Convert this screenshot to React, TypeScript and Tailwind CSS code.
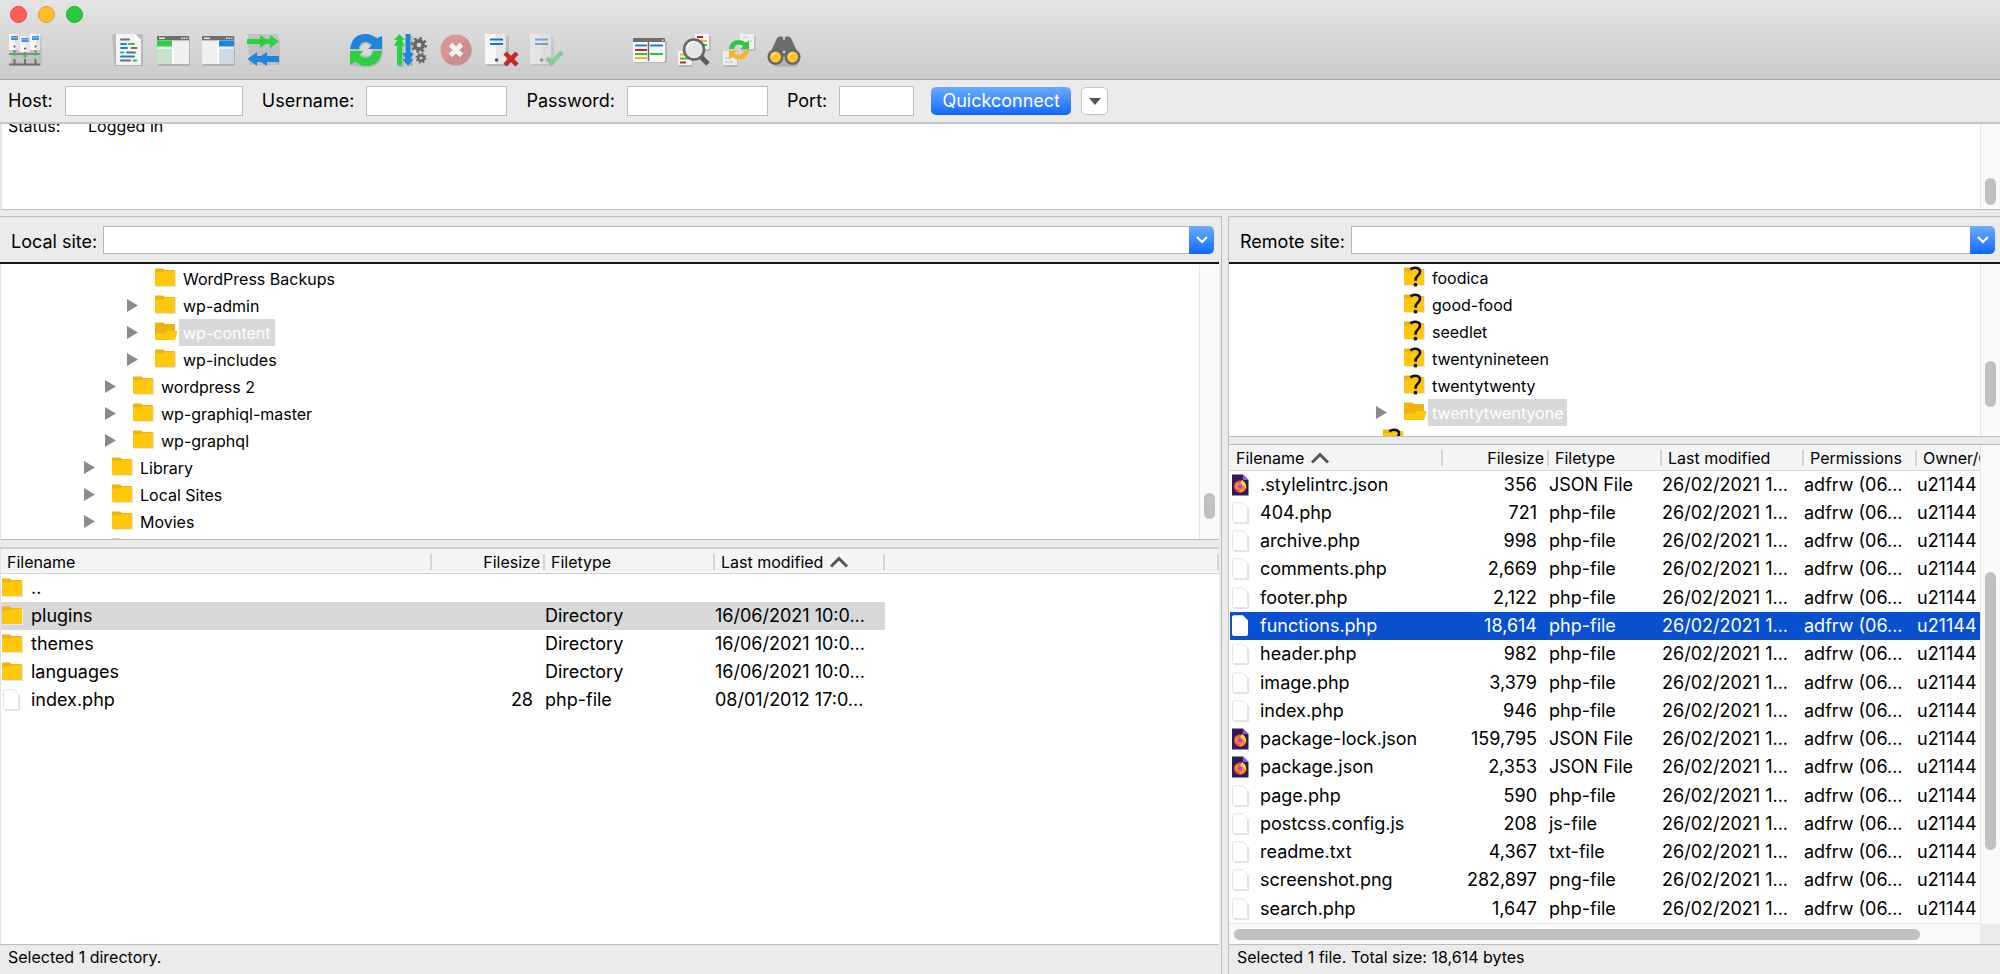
import React from "react";
import type { ReactNode } from "react";

type TreeItem = {
  name: string;
  level: number;
  icon: "folder" | "open" | "unknown";
  expandable?: boolean;
  selected?: boolean;
};

type FileRow = {
  name: string;
  size: string;
  type: string;
  modified: string;
  icon: "folder" | "file" | "json";
  selected?: boolean;
};

const localTree: TreeItem[] = [
  { name: "WordPress Backups", level: 3, icon: "folder" },
  { name: "wp-admin", level: 3, icon: "folder", expandable: true },
  { name: "wp-content", level: 3, icon: "open", expandable: true, selected: true },
  { name: "wp-includes", level: 3, icon: "folder", expandable: true },
  { name: "wordpress 2", level: 2, icon: "folder", expandable: true },
  { name: "wp-graphiql-master", level: 2, icon: "folder", expandable: true },
  { name: "wp-graphql", level: 2, icon: "folder", expandable: true },
  { name: "Library", level: 1, icon: "folder", expandable: true },
  { name: "Local Sites", level: 1, icon: "folder", expandable: true },
  { name: "Movies", level: 1, icon: "folder", expandable: true },
  { name: "", level: 1, icon: "folder" },
];

const remoteTree: TreeItem[] = [
  { name: "foodica", level: 4, icon: "unknown" },
  { name: "good-food", level: 4, icon: "unknown" },
  { name: "seedlet", level: 4, icon: "unknown" },
  { name: "twentynineteen", level: 4, icon: "unknown" },
  { name: "twentytwenty", level: 4, icon: "unknown" },
  { name: "twentytwentyone", level: 4, icon: "open", expandable: true, selected: true },
  { name: "", level: 3, icon: "unknown" },
];

const localFiles: FileRow[] = [
  { name: "..", size: "", type: "", modified: "", icon: "folder" },
  { name: "plugins", size: "", type: "Directory", modified: "16/06/2021 10:0...", icon: "folder", selected: true },
  { name: "themes", size: "", type: "Directory", modified: "16/06/2021 10:0...", icon: "folder" },
  { name: "languages", size: "", type: "Directory", modified: "16/06/2021 10:0...", icon: "folder" },
  { name: "index.php", size: "28", type: "php-file", modified: "08/01/2012 17:0...", icon: "file" },
];

const remoteDate = "26/02/2021 1...";

const remoteFiles: FileRow[] = [
  { name: ".stylelintrc.json", size: "356", type: "JSON File", modified: remoteDate, icon: "json" },
  { name: "404.php", size: "721", type: "php-file", modified: remoteDate, icon: "file" },
  { name: "archive.php", size: "998", type: "php-file", modified: remoteDate, icon: "file" },
  { name: "comments.php", size: "2,669", type: "php-file", modified: remoteDate, icon: "file" },
  { name: "footer.php", size: "2,122", type: "php-file", modified: remoteDate, icon: "file" },
  { name: "functions.php", size: "18,614", type: "php-file", modified: remoteDate, icon: "file", selected: true },
  { name: "header.php", size: "982", type: "php-file", modified: remoteDate, icon: "file" },
  { name: "image.php", size: "3,379", type: "php-file", modified: remoteDate, icon: "file" },
  { name: "index.php", size: "946", type: "php-file", modified: remoteDate, icon: "file" },
  { name: "package-lock.json", size: "159,795", type: "JSON File", modified: remoteDate, icon: "json" },
  { name: "package.json", size: "2,353", type: "JSON File", modified: remoteDate, icon: "json" },
  { name: "page.php", size: "590", type: "php-file", modified: remoteDate, icon: "file" },
  { name: "postcss.config.js", size: "208", type: "js-file", modified: remoteDate, icon: "file" },
  { name: "readme.txt", size: "4,367", type: "txt-file", modified: remoteDate, icon: "file" },
  { name: "screenshot.png", size: "282,897", type: "png-file", modified: remoteDate, icon: "file" },
  { name: "search.php", size: "1,647", type: "php-file", modified: remoteDate, icon: "file" },
];

/* ---------- small icons ---------- */

function FolderShape() {
  return (
    <>
      <path d="M2 4h20v16H2z" fill="#e3e6f0" />
      <path d="M1 2.500q0-1 1-1h7L11 3h9q1 0 1 1v4H1z" fill="#ecb40c" />
      <path d="M1 5.500h8l2-1.500h10v14q0 1-1 1H2q-1 0-1-1z" fill="#ffc90a" />
    </>
  );
}

function FolderIcon() {
  return (
    <svg className="block size-[22px] shrink-0" viewBox="0 0 22 22" aria-hidden="true">
      <FolderShape />
    </svg>
  );
}

function OpenFolderIcon() {
  return (
    <svg className="block size-[22px] shrink-0 overflow-visible" viewBox="0 0 22 22" aria-hidden="true">
      <path d="M1 2.500q0-1 1-1h7L11 3h9q1 0 1 1v14H1z" fill="#ecb40c" />
      <path d="M1 12.500h10l2.500-2.500h10L21.500 18q-.5 1-1.500 1H2q-1 0-1-1z" fill="#ffc90a" />
    </svg>
  );
}

function UnknownFolderIcon() {
  return (
    <svg className="block size-[22px] shrink-0" viewBox="0 0 22 22" aria-hidden="true">
      <FolderShape />
      <path
        d="M7.500 3.500Q9.500 1.500 12.500 1.700q4.500.3 4.500 4 0 2.200-2.500 4.200-2 1.800-2 4.800"
        fill="none"
        stroke="#111"
        strokeWidth="2.600"
      />
      <circle cx="12.500" cy="18.700" r="1.900" fill="#111" />
    </svg>
  );
}

function FileIcon({ selected }: { selected?: boolean }) {
  return (
    <svg className="block size-[22px] shrink-0" viewBox="0 0 22 22" aria-hidden="true">
      {!selected && <path d="M4 21.500h13q1.500 0 1.500-1.500V6" fill="none" stroke="#e2e2e2" strokeWidth="1.500" />}
      <path
        d="M3.500.800h9.500l4.500 4.500v14.200q0 1-1 1h-13q-1 0-1-1V1.800q0-1 1-1z"
        fill="#fff"
        stroke={selected ? "#fff" : "#e4e4e4"}
      />
    </svg>
  );
}

function JsonIcon() {
  return (
    <svg className="block size-[22px] shrink-0" viewBox="0 0 22 22" aria-hidden="true">
      <path d="M2 .500h11l5.500 5.500V21.500H2z" fill="#2b1d55" />
      <path d="M13 .500 18.500 6H13z" fill="#9059ff" />
      <circle cx="10" cy="12.500" r="6" fill="#ff4f4a" />
      <path d="M5 9.500Q8 8.500 9.500 10L12 6q4.500 3.500 4 7.500-1.200 5-6 5Q5 17 5 9.500z" fill="#ff8a1f" />
      <path d="M12 6q5.500 4 3.800 9-1.500-4.500-5.300-5z" fill="#ffd83b" />
      <circle cx="10" cy="12.500" r="2.300" fill="#9b4fe0" />
      <path d="M4.500 14q3 3 6.500 1.500-2.500 3-5 1.500z" fill="#ff2f5e" />
    </svg>
  );
}

function SortArrow() {
  return (
    <svg className="block h-3 w-5" viewBox="0 0 20 12" aria-hidden="true">
      <path d="m2 10.500 8-8 8 8" fill="none" stroke="#555" strokeWidth="3" />
    </svg>
  );
}

/* ---------- toolbar icons ---------- */

function ToolIcon({ children, dim }: { children: ReactNode; dim?: boolean }) {
  return (
    <svg
      className={dim ? "block size-9 opacity-50" : "block size-9"}
      viewBox="0 0 36 36"
      aria-hidden="true"
    >
      {children}
    </svg>
  );
}

function Tower({ x, y }: { x: number; y: number }) {
  return (
    <g transform={`translate(${x} ${y})`}>
      <path d="M0 0h10v16H0z" fill="#f7f7f7" />
      <path d="M6 0h4v16H6z" fill="#e4e4e4" />
      <path d="M2 2h7v4H2z" fill="#3d8ddb" />
      <path d="M2 3.600h7" stroke="#9cc6ee" strokeWidth=".8" />
      <circle cx="5.500" cy="12.500" r="1" fill="#444" />
    </g>
  );
}

function SiteManagerIcon() {
  return (
    <ToolIcon>
      <path d="M4 4h31v30H4z" fill="#000" opacity=".08" />
      <Tower x={2} y={2} />
      <Tower x={23} y={2} />
      <Tower x={12.5} y={4} />
      <path d="M2 22h31M7.500 18v5M28.500 18v5M18 20v5" stroke="#777" strokeWidth="1.500" />
      <path d="M2 32.500h31M7.500 27v5M28.500 27v5M18 27v5" stroke="#707070" strokeWidth="2" />
      <path d="M6 20.500h3v3H6zM27 20.500h3v3h-3zM16.500 22.500h3v3h-3z" fill="#2ccf3c" />
    </ToolIcon>
  );
}

function LogIcon() {
  return (
    <ToolIcon>
      <path d="M3 2h30v32H5L2 6z" fill="#000" opacity=".13" />
      <path d="M6 2h19l6 6v25H6z" fill="#f4f4f4" />
      <path d="M25 2v6h6z" fill="#fff" />
      <g strokeWidth="2" strokeLinecap="round">
        <path d="M11 7.500h8M21.500 16h5M17 20.500h8M11 28.500h9" stroke="#6d6d6d" />
        <path d="M11 12h5M11 16h6M11 24.500h13" stroke="#1d83d8" />
        <path d="M19 12h5M11 20.500h2.500M23.500 28.500h3" stroke="#27c93f" />
      </g>
    </ToolIcon>
  );
}

function WindowFrame() {
  return (
    <>
      <path d="M3 4h32v30H3z" fill="#000" opacity=".14" />
      <path d="M2 5q0-1 1-1h30q1 0 1 1v3.500H2z" fill="#6e6e6e" />
      <path d="M4 5.500h6V7H4zM26 5.500h1.500V7H26zM28.500 5.500H30V7h-1.500zM31 5.500h1.500V7H31z" fill="#e6e6e6" />
      <path d="M2 8.500h32V31q0 1-1 1H3q-1 0-1-1z" fill="#f0f0f0" />
    </>
  );
}

function LocalTreeIcon() {
  return (
    <ToolIcon>
      <WindowFrame />
      <path d="M2 8.500h15v6H2z" fill="#2bd043" />
      <path d="M2 17h15v15H3q-1 0-1-1z" fill="#c6e2ca" />
      <path d="M17 8.500h1.500V32H17z" fill="#fff" />
    </ToolIcon>
  );
}

function RemoteTreeIcon() {
  return (
    <ToolIcon>
      <WindowFrame />
      <path d="M19 8.500h15v6H19z" fill="#1d86dc" />
      <path d="M19 17h15v14q0 1-1 1H19z" fill="#ccdae8" />
      <path d="M17.500 8.500H19V32h-1.500z" fill="#fff" />
    </ToolIcon>
  );
}

function QueueIcon() {
  return (
    <ToolIcon>
      <path d="M3 2h30l2 9v22H4z" fill="#000" opacity=".09" />
      <path d="M2 7h13V3l6 4h4V3l9 6.500-9 6.500v-4h-4l-6 4v-4H2z" fill="#2bd043" />
      <path d="M34 24v6H22v4l-6-4h-4v4l-9.500-7 9.500-7v4h4l6-4v4z" fill="#1d86dc" />
    </ToolIcon>
  );
}

function RefreshShape() {
  return (
    <>
      <path d="M2 17Q4 2 18 2q6 0 10.500 4.500L34 4v13H20l4-4q-3-3-6-3-6 0-7 7z" fill="#1d86dc" />
      <path d="M34 19Q32 34 18 34q-6 0-10.500-4.500L2 33.500V19h13.500l-4 4q3 3 6.500 3 6 0 7-7z" fill="#2bd043" />
    </>
  );
}

function RefreshIcon() {
  return (
    <ToolIcon>
      <path d="M4 18.500q2-15 16-15l15 2v15q-2 15-16 15L4 34z" opacity=".1" />
      <circle cx="18" cy="18" r="6" fill="#d8d8d8" />
      <RefreshShape />
    </ToolIcon>
  );
}

function Gear({ cx, cy, r }: { cx: number; cy: number; r: number }) {
  return (
    <g fill="none" stroke="#666">
      <circle cx={cx} cy={cy} r={r * 0.52} strokeWidth={r * 0.45} />
      <circle
        cx={cx}
        cy={cy}
        r={r * 0.85}
        strokeWidth={r * 0.3}
        strokeDasharray={`${r * 0.334} ${r * 0.334}`}
      />
    </g>
  );
}

function ProcessQueueIcon() {
  return (
    <ToolIcon>
      <path d="M6 12h5v23H6zM16 4h4v30h-4z" fill="#000" opacity=".12" />
      <path d="M6.500 2 12 8H9l3 6H9v19.500H4V14H1l3-6H1z" fill="#2bd043" />
      <path d="M12.500 2h5v19h3l-3 6h3L15 34l-5.500-7h3l-3-6h3z" fill="#1d86dc" />
      <Gear cx={26} cy={13} r={8} />
      <Gear cx={28} cy={26} r={5.500} />
    </ToolIcon>
  );
}

function CancelIcon() {
  return (
    <ToolIcon>
      <circle cx="18" cy="18" r="15.500" fill="#d99494" />
      <path d="M29 7a15.500 15.500 0 0 1-22 22z" fill="#c98e8e" />
      <path d="m12.500 12.500 11 11M23.500 12.500l-11 11" stroke="#f2f2f2" strokeWidth="5" />
    </ToolIcon>
  );
}

function ServerBox() {
  return (
    <>
      <path d="M4 4h22v30H4z" fill="#000" opacity=".12" />
      <path d="M2 2h21v30H2z" fill="#f6f6f6" />
      <path d="M13 2h10v30H13z" fill="#e6e6e6" />
      <path d="M7 7.500h13M7 12h13" stroke="#1f72c6" strokeWidth="2" />
      <circle cx="13.500" cy="28" r="1.800" fill="#555" />
    </>
  );
}

function DisconnectIcon() {
  return (
    <ToolIcon>
      <ServerBox />
      <path d="m22 21 12 12M34 21 22 33" stroke="#c62828" strokeWidth="4.500" />
    </ToolIcon>
  );
}

function ReconnectIcon() {
  return (
    <ToolIcon dim>
      <ServerBox />
      <path d="m19 26 4.500 5L34 20" fill="none" stroke="#35c860" strokeWidth="4.500" />
    </ToolIcon>
  );
}

function FilterIcon() {
  return (
    <ToolIcon>
      <path d="M4 9h32v22H4z" fill="#000" opacity=".14" />
      <path d="M2 7q0-1 1-1h30q1 0 1 1v3H2z" fill="#6e6e6e" />
      <path d="M31 7.500h1.500V9H31z" fill="#ddd" />
      <path d="M2 10h32v18q0 2-2 2H4q-2 0-2-2z" fill="#f8f8f8" />
      <g strokeWidth="2">
        <path d="M4 13.500h12M19 13.500h13" stroke="#1d83d8" />
        <path d="M4 18h12" stroke="#d02424" />
        <path d="M4 22h12M19 22h13" stroke="#27c93f" />
        <path d="M4 26h12" stroke="#f6b41e" />
      </g>
      <path d="M17.500 10v19" stroke="#6a6a6a" strokeWidth="1.500" />
    </ToolIcon>
  );
}

function CompareIcon() {
  return (
    <ToolIcon>
      <path d="M20 4h15v15H20zM3 20h14v15H3z" fill="#000" opacity=".12" />
      <path d="M19 2h14v15H19zM2 19h14v14H2z" fill="#f6f6f6" />
      <path d="M21 5h6M4 30.500h6" stroke="#d02424" strokeWidth="2" />
      <path d="M25 9h6M4 22.500h6" stroke="#f6b41e" strokeWidth="2" />
      <path d="M26 13h5M4 26.500h8" stroke="#27c93f" strokeWidth="2" />
      <path d="m24 24 8 8" stroke="#5c5c5c" strokeWidth="5" />
      <circle cx="18" cy="17.500" r="10" fill="#e6e6e6" stroke="#666" strokeWidth="2.500" />
      <path d="M11 16q1-6 7-6" fill="none" stroke="#fff" strokeWidth="2" />
    </ToolIcon>
  );
}

function SyncBrowseIcon() {
  return (
    <ToolIcon>
      <path d="M20 4h15v15H20zM3 20h14v15H3z" fill="#000" opacity=".1" />
      <path d="M19 2h14v15H19zM2 19h14v14H2z" fill="#efefef" />
      <path d="M22 5.500h5M27 9h4M4 26h5M4 30h8" stroke="#d6d6d6" strokeWidth="2" />
      <path d="M8 17q1-9 10-9 4 0 6.500 2.500L28 9v8h-9l3-3q-2-1.500-4-1.500-4 0-5 4.500z" fill="#2bc943" />
      <path d="M28 18.500q-1 9-10 9-4 0-6.500-2.500L8 27.500v-9h9l-3 3q2 1.500 4 1.500 4 0 5-4.500z" fill="#f6b62c" />
    </ToolIcon>
  );
}

function SearchIcon() {
  return (
    <ToolIcon>
      <path d="M5 22 12 6l13 1 10 18-4 10H9z" fill="#000" opacity=".12" />
      <path d="M11 6q3-3 6-1v3h2V5q3-2 6 1l8 18H3z" fill="#6d6d6d" />
      <circle cx="9.500" cy="25" r="8" fill="#666" />
      <circle cx="26.500" cy="25" r="8" fill="#666" />
      <circle cx="9.500" cy="25" r="5.500" fill="#ffc52b" />
      <circle cx="26.500" cy="25" r="5.500" fill="#ffc52b" />
      <path d="M6.500 24q.5-2 3-3M23.500 24q.5-2 3-3" fill="none" stroke="#fff0b8" strokeWidth="1.500" />
      <circle cx="18" cy="20" r="1.300" fill="#ddd" />
    </ToolIcon>
  );
}

const toolGroups = [
  [{ label: "Site Manager", icon: <SiteManagerIcon /> }],
  [
    { label: "Toggle message log", icon: <LogIcon /> },
    { label: "Toggle local tree", icon: <LocalTreeIcon /> },
    { label: "Toggle remote tree", icon: <RemoteTreeIcon /> },
    { label: "Toggle transfer queue", icon: <QueueIcon /> },
  ],
  [
    { label: "Refresh", icon: <RefreshIcon /> },
    { label: "Process queue", icon: <ProcessQueueIcon /> },
    { label: "Cancel", icon: <CancelIcon /> },
    { label: "Disconnect", icon: <DisconnectIcon /> },
    { label: "Reconnect", icon: <ReconnectIcon /> },
  ],
  [
    { label: "Filters", icon: <FilterIcon /> },
    { label: "Directory comparison", icon: <CompareIcon /> },
    { label: "Synchronized browsing", icon: <SyncBrowseIcon /> },
    { label: "Find files", icon: <SearchIcon /> },
  ],
];

/* ---------- window parts ---------- */

function TitleBar() {
  return (
    <header className="border-b border-[#a5a5a5] bg-linear-to-b from-[#e4e4e4] to-[#cbcbcb] pb-[11px]">
      <div className="flex gap-[11px] px-2.5 pt-1.5">
        <button aria-label="Close" className="size-[17px] rounded-full border border-[#e0443e] bg-[#ff5f57]" />
        <button aria-label="Minimize" className="size-[17px] rounded-full border border-[#dea123] bg-[#febc2e]" />
        <button aria-label="Zoom" className="size-[17px] rounded-full border border-[#1aab29] bg-[#28c840]" />
      </div>
      <div className="flex gap-[67px] px-[7px] pt-[9px]">
        {toolGroups.map((group) => (
          <div key={group[0].label} className="flex gap-[9px]">
            {group.map((tool) => (
              <button key={tool.label} aria-label={tool.label}>
                {tool.icon}
              </button>
            ))}
          </div>
        ))}
      </div>
    </header>
  );
}

function Field({ id, label, width, type = "text" }: { id: string; label: string; width: string; type?: string }) {
  return (
    <div className="flex items-center gap-3">
      <label htmlFor={id}>{label}</label>
      <input id={id} type={type} className={`h-[30px] border border-[#bdbdbd] bg-white px-1 outline-none ${width}`} />
    </div>
  );
}

function QuickConnect() {
  return (
    <form className="flex items-center border-b-2 border-[#c6c6c6] bg-[#ebebeb] py-1.5 pl-2 text-lg leading-[30px]">
      <div className="flex gap-[19px]">
        <Field id="host" label="Host:" width="w-[178px]" />
        <Field id="user" label="Username:" width="w-[141px]" />
        <Field id="pass" label="Password:" width="w-[141px]" type="password" />
        <Field id="port" label="Port:" width="w-[75px]" />
      </div>
      <button
        type="button"
        className="ml-[17px] h-7 w-[140px] rounded-[5px] bg-linear-to-b from-[#6aabff] to-[#0a66ff] leading-7 text-white"
      >
        Quickconnect
      </button>
      <button
        type="button"
        aria-label="Quickconnect history"
        className="ml-2.5 flex h-7 w-[27px] items-center justify-center rounded-[5px] border border-[#c4c4c4] bg-white"
      >
        <svg className="h-[7px] w-3" viewBox="0 0 12 7" aria-hidden="true">
          <path d="M0 0h12L6 7z" fill="#555" />
        </svg>
      </button>
    </form>
  );
}

function VerticalTrack({ children }: { children: ReactNode }) {
  return (
    <div className="flex w-5 shrink-0 flex-col items-center border-l border-[#e6e6e6] bg-[#fafafa]">
      {children}
    </div>
  );
}

function MessageLog() {
  return (
    <section className="flex h-[86px] shrink-0 border-b border-l-2 border-b-[#bcbcbc] border-l-[#e4e4e4] bg-white">
      <div className="flex-1 overflow-hidden pl-1.5 text-base leading-5">
        <p className="-mt-2 flex">
          <span className="w-20">Status:</span>
          <span>Logged in</span>
        </p>
      </div>
      <VerticalTrack>
        <span className="mt-auto mb-1 h-[27px] w-[11px] rounded-full bg-[#c1c1c1]" />
      </VerticalTrack>
    </section>
  );
}

function SiteBar({ id, label }: { id: string; label: string }) {
  return (
    <div className="flex h-[47px] shrink-0 items-center gap-1.5 border-b-2 border-[#151515] bg-[#ebebeb] pr-[5px] pl-[11px] text-lg">
      <label htmlFor={id} className="pt-1 whitespace-nowrap">
        {label}
      </label>
      <div className="flex h-7 min-w-0 flex-1">
        <input id={id} className="min-w-0 flex-1 border border-r-0 border-[#b5b5b5] bg-white px-1 outline-none" />
        <button
          aria-label={`${label} history`}
          className="flex w-[25px] items-center justify-center rounded-r-[5px] bg-linear-to-b from-[#6aabff] to-[#0a66ff]"
        >
          <svg className="h-2 w-3" viewBox="0 0 12 8" aria-hidden="true">
            <path d="m1 1 5 5 5-5" fill="none" stroke="#fff" strokeWidth="2.200" />
          </svg>
        </button>
      </div>
    </div>
  );
}

const indent = ["pl-[83px]", "pl-[104px]", "pl-[126px]", "pl-[147px]"];

function Tree({ items }: { items: TreeItem[] }) {
  return (
    <ul className="min-w-0 flex-1 overflow-hidden text-base leading-[29px]">
      {items.map((item, i) => (
        <li key={i} className={`flex h-[27px] ${indent[item.level - 1]}`}>
          <span className="flex w-[27px] items-center">
            {item.expandable && (
              <svg className="h-[13px] w-[11px]" viewBox="0 0 11 13" aria-hidden="true">
                <path d="M0 0v13l11-6.500z" fill="#8a8a8a" />
              </svg>
            )}
          </span>
          <span className="w-[25px] pt-0.5">
            {item.icon === "folder" && <FolderIcon />}
            {item.icon === "open" && <OpenFolderIcon />}
            {item.icon === "unknown" && <UnknownFolderIcon />}
          </span>
          <span className={item.selected ? "bg-[#d8d8d8] px-1 text-white" : "px-1"}>{item.name}</span>
        </li>
      ))}
    </ul>
  );
}

function HeaderCell({ children, right, last }: { children?: ReactNode; right?: boolean; last?: boolean }) {
  return (
    <th className="overflow-hidden border-b border-[#d4d4d4] bg-[#f4f4f4] p-0 font-normal">
      <div className="flex h-6 items-center pt-0.5 pl-1.5">
        <span className={right ? "flex-1 pr-[3px] text-right" : "flex flex-1 items-center gap-1.5 whitespace-nowrap"}>
          {children}
        </span>
        {!last && <span className="h-4 w-0.5 shrink-0 bg-[#d4d4d4]" />}
      </div>
    </th>
  );
}

function FileCells({ file, bg }: { file: FileRow; bg: string }) {
  return (
    <>
      <td className={`p-0 ${bg}`}>
        <div className="flex items-center gap-2">
          {file.icon === "folder" && <FolderIcon />}
          {file.icon === "file" && <FileIcon selected={file.selected} />}
          {file.icon === "json" && <JsonIcon />}
          <span>{file.name}</span>
        </div>
      </td>
      <td className={`p-0 pr-3 text-right ${bg}`}>{file.size}</td>
      <td className={`p-0 ${bg}`}>{file.type}</td>
      <td className={`p-0 ${bg}`}>{file.modified}</td>
    </>
  );
}

function LocalFiles() {
  return (
    <div className="min-h-0 flex-1 overflow-hidden border-l border-[#e4e4e4] bg-white">
      <table className="w-full table-fixed border-collapse text-left text-lg leading-7">
        <colgroup>
          <col className="w-[431px]" />
          <col className="w-[113px]" />
          <col className="w-[170px]" />
          <col className="w-[170px]" />
          <col />
        </colgroup>
        <thead className="text-base leading-[22px]">
          <tr>
            <HeaderCell>Filename</HeaderCell>
            <HeaderCell right>Filesize</HeaderCell>
            <HeaderCell>Filetype</HeaderCell>
            <HeaderCell>
              Last modified <SortArrow />
            </HeaderCell>
            <HeaderCell />
          </tr>
        </thead>
        <tbody className="whitespace-nowrap">
          {localFiles.map((file) => (
            <tr key={file.name} className="h-7">
              {/* the selection stops at the last named column */}
              <FileCells file={file} bg={file.selected ? "bg-[#d8d8d8]" : ""} />
              <td />
            </tr>
          ))}
        </tbody>
      </table>
    </div>
  );
}

function RemoteFiles() {
  return (
    <div className="flex min-h-0 flex-1 bg-white">
      <div className="flex min-w-0 flex-1 flex-col">
        <div className="min-h-0 flex-1 overflow-hidden pl-px">
          <table className="h-full w-full table-fixed border-collapse text-left text-lg leading-7">
            <colgroup>
              <col className="w-[213px]" />
              <col className="w-[106px]" />
              <col className="w-[113px]" />
              <col className="w-[142px]" />
              <col className="w-[113px]" />
              <col />
            </colgroup>
            <thead className="h-[25px] text-base leading-[22px]">
              <tr>
                <HeaderCell>
                  Filename <SortArrow />
                </HeaderCell>
                <HeaderCell right>Filesize</HeaderCell>
                <HeaderCell>Filetype</HeaderCell>
                <HeaderCell>Last modified</HeaderCell>
                <HeaderCell>Permissions</HeaderCell>
                <HeaderCell last>Owner/G</HeaderCell>
              </tr>
            </thead>
            <tbody className="whitespace-nowrap">
              {remoteFiles.map((file) => (
                <tr key={file.name} className={file.selected ? "bg-[#0950d0] text-white" : ""}>
                  <FileCells file={file} bg="" />
                  <td className="p-0">adfrw (06...</td>
                  <td className="overflow-hidden p-0">u21144</td>
                </tr>
              ))}
            </tbody>
          </table>
        </div>
        <div className="flex h-[21px] shrink-0 items-center border-t border-[#e6e6e6] bg-[#fafafa] pl-[5px]">
          <span className="h-[11px] w-[92%] rounded-full bg-[#c1c1c1]" />
        </div>
      </div>
      <div className="flex flex-col">
        <div className="flex min-h-0 flex-1">
          <VerticalTrack>
            <span className="grow-[127]" />
            <span className="w-[11px] grow-[279] rounded-full bg-[#c1c1c1]" />
            <span className="grow-[74]" />
          </VerticalTrack>
        </div>
        <span className="h-5 bg-[#ebebeb]" />
      </div>
    </div>
  );
}

export default function App() {
  return (
    <div className="flex h-screen flex-col overflow-hidden bg-[#ebebeb] font-['Inter',sans-serif] text-black">
      <TitleBar />
      <QuickConnect />
      <MessageLog />
      <main className="mt-1.5 grid min-h-0 flex-1 grid-cols-[minmax(0,1222fr)_6px_minmax(0,772fr)]">
        <section className="flex min-h-0 flex-col border-t border-r border-[#bcbcbc] pr-0.5">
          <SiteBar id="local-site" label="Local site:" />
          <div className="flex h-[276px] shrink-0 border-b border-l border-b-[#bcbcbc] border-l-[#e4e4e4] bg-white pt-px">
            <Tree items={localTree} />
            <VerticalTrack>
              <span className="mt-auto mb-5 h-[26px] w-[11px] rounded-full bg-[#c1c1c1]" />
            </VerticalTrack>
          </div>
          <div className="h-[9px] shrink-0 border-b-2 border-[#cfcfcf]" />
          <LocalFiles />
          <footer className="h-[30px] shrink-0 border-t border-[#bcbcbc] pl-2 text-base leading-6">
            Selected 1 directory.
          </footer>
        </section>
        <span />
        <section className="flex min-h-0 flex-col border-t border-l border-[#bcbcbc]">
          <SiteBar id="remote-site" label="Remote site:" />
          <div className="flex h-[173px] shrink-0 border-b border-[#bcbcbc] bg-white">
            <Tree items={remoteTree} />
            <VerticalTrack>
              <span className="mt-auto mb-[29px] h-[46px] w-[11px] rounded-full bg-[#c1c1c1]" />
            </VerticalTrack>
          </div>
          <div className="h-2 shrink-0 border-b border-[#bcbcbc]" />
          <RemoteFiles />
          <footer className="h-[30px] shrink-0 border-t border-[#bcbcbc] pl-2 text-base leading-6">
            Selected 1 file. Total size: 18,614 bytes
          </footer>
        </section>
      </main>
    </div>
  );
}
